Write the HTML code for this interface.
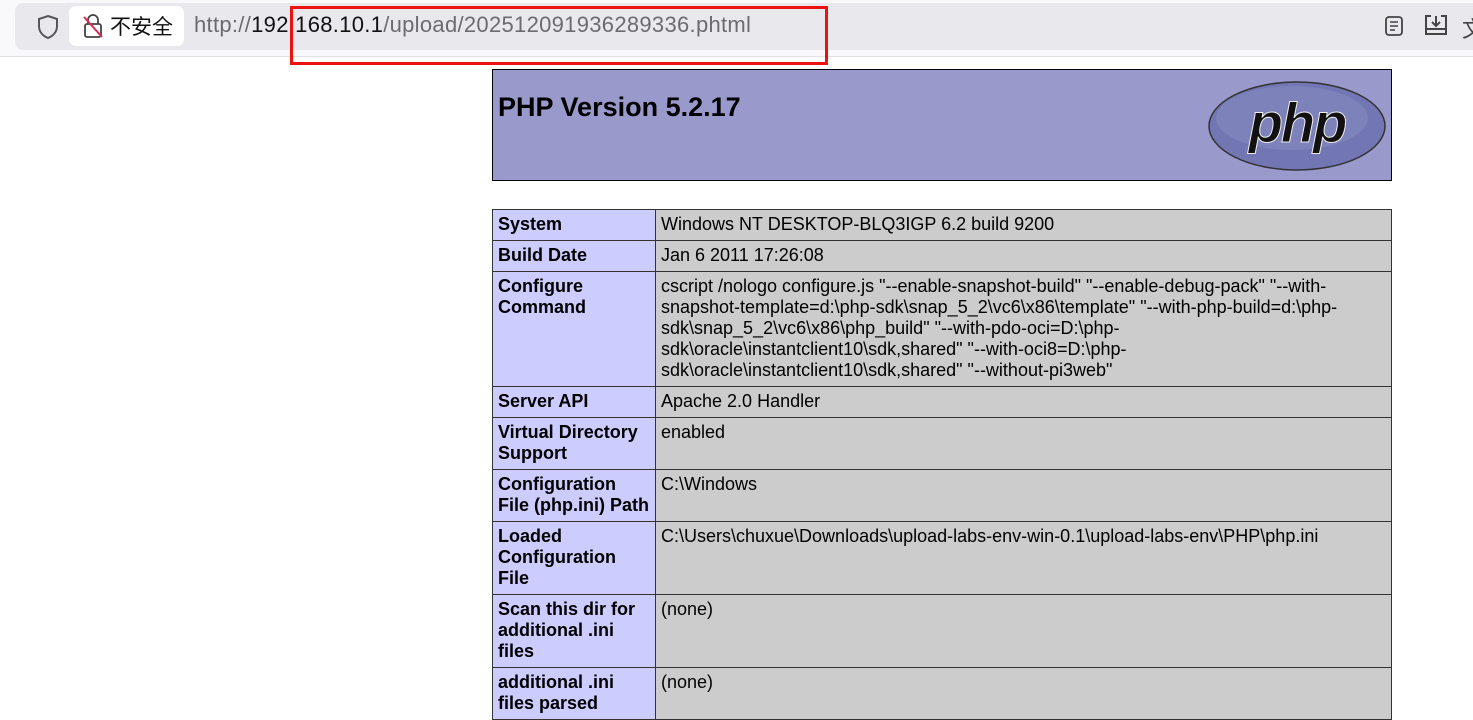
<!DOCTYPE html>
<html><head><meta charset="utf-8"><style>
body{margin:0;width:1473px;height:708px;overflow:hidden;background:#fff;font-family:"Liberation Sans",Arial,sans-serif;position:relative}
.bar{position:absolute;left:0;top:0;width:1473px;height:56px;background:#f9f9fb;border-bottom:1px solid #e0e0e6}
.url{position:absolute;left:15px;top:3px;width:1470px;height:47px;background:#e9e9ed;border-radius:8px}
.chip{position:absolute;left:69px;top:6px;width:115px;height:40px;background:#fff;border-radius:7px}
.utext{position:absolute;left:194px;top:12px;font-size:22px;color:#6b6b70;white-space:nowrap;letter-spacing:0.3px}
.red{position:absolute;left:290px;top:6px;width:538px;height:59px;border:3px solid #ee1111;box-sizing:border-box}
.hdr{position:absolute;left:492px;top:69px;width:900px;height:112px;background:#9999cc;border:1px solid #000;box-sizing:border-box}
.hdr h1{margin:0;position:absolute;left:5px;top:22px;font-size:27px;font-weight:bold}
table{position:absolute;left:492px;top:209px;width:900px;border-collapse:collapse;font-size:18px}
td{border:1px solid #333;padding:4px 5px 5px 5px;line-height:21px;vertical-align:top;background:#cccccc}
td.e{background:#ccccff;font-weight:bold;width:152px}
</style></head><body>
<div class="bar"><div class="url"></div>
<svg style="position:absolute;left:36px;top:14px" width="24" height="26" viewBox="0 0 24 26"><path d="M12 2 L21 5 V12 C21 18 17 22 12 24 C7 22 3 18 3 12 V5 Z" fill="none" stroke="#555" stroke-width="2"/></svg>
<div class="chip"></div>
<svg style="position:absolute;left:82px;top:13px" width="22" height="26" viewBox="0 0 22 26"><path d="M6 11 V7 a5 5 0 0 1 10 0 V11" fill="none" stroke="#444" stroke-width="1.8"/><rect x="3" y="11" width="16" height="13" rx="2" fill="none" stroke="#444" stroke-width="1.8"/><path d="M2 4 L20 24" stroke="#e22850" stroke-width="2"/></svg>
<div style="position:absolute;left:110px;top:13px;font-size:21px;font-family:'Noto Sans CJK SC',sans-serif;color:#111;line-height:26px">不安全</div>
<div class="utext">http://<span style="color:#111">192.168.10.1</span>/upload/202512091936289336.phtml</div>
<svg style="position:absolute;left:1384px;top:15px" width="20" height="22" viewBox="0 0 20 22"><rect x="2" y="2" width="16" height="18" rx="3" fill="none" stroke="#444" stroke-width="1.8"/><path d="M6 7h8M6 11h8M6 15h5" stroke="#444" stroke-width="1.6"/></svg>
<svg style="position:absolute;left:1423px;top:13px" width="26" height="24" viewBox="0 0 26 24"><path d="M8 3 H3 V21 H23 V3 H18" fill="none" stroke="#444" stroke-width="2"/><path d="M3 16 H23" stroke="#444" stroke-width="2"/><path d="M13 3 V12 M9 9 L13 13 L17 9" fill="none" stroke="#444" stroke-width="2"/></svg>
<div style="position:absolute;left:1462px;top:12px;font-size:22px;color:#444;font-family:'Noto Sans CJK SC',sans-serif">文</div>
</div>
<div class="red"></div>
<div class="hdr"><h1>PHP Version 5.2.17</h1>
<svg style="position:absolute;left:714px;top:10px" width="180" height="92" viewBox="0 0 180 92"><ellipse cx="90" cy="46" rx="88" ry="44" fill="#7276b2" stroke="#333" stroke-width="1.5"/><ellipse cx="85" cy="38" rx="76" ry="32" fill="#8a8ec2" opacity="0.5"/><text x="90" y="62" text-anchor="middle" font-family="Liberation Sans,sans-serif" font-size="56" font-weight="bold" font-style="italic" fill="#111" stroke="#eee" stroke-width="1" letter-spacing="-2">php</text></svg>
</div>
<table>
<tr><td class="e">System</td><td>Windows NT DESKTOP-BLQ3IGP 6.2 build 9200</td></tr>
<tr><td class="e">Build Date</td><td>Jan 6 2011 17:26:08</td></tr>
<tr><td class="e">Configure<br>Command</td><td>cscript /nologo configure.js "--enable-snapshot-build" "--enable-debug-pack" "--with-<br>snapshot-template=d:\php-sdk\snap_5_2\vc6\x86\template" "--with-php-build=d:\php-<br>sdk\snap_5_2\vc6\x86\php_build" "--with-pdo-oci=D:\php-<br>sdk\oracle\instantclient10\sdk,shared" "--with-oci8=D:\php-<br>sdk\oracle\instantclient10\sdk,shared" "--without-pi3web"</td></tr>
<tr><td class="e">Server API</td><td>Apache 2.0 Handler</td></tr>
<tr><td class="e">Virtual Directory<br>Support</td><td>enabled</td></tr>
<tr><td class="e">Configuration<br>File (php.ini) Path</td><td>C:\Windows</td></tr>
<tr><td class="e">Loaded<br>Configuration<br>File</td><td>C:\Users\chuxue\Downloads\upload-labs-env-win-0.1\upload-labs-env\PHP\php.ini</td></tr>
<tr><td class="e">Scan this dir for<br>additional .ini<br>files</td><td>(none)</td></tr>
<tr><td class="e">additional .ini<br>files parsed</td><td>(none)</td></tr>
</table>
</body></html>
